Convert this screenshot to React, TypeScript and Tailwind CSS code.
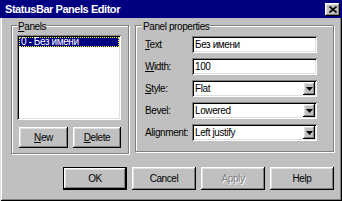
const font = "font-['Liberation_Sans',Arial,sans-serif] text-[10px] tracking-[-0.4px] text-black";
const raised =
  "shadow-[inset_-1px_-1px_#000,inset_1px_1px_#fff,inset_-2px_-2px_#808080,inset_2px_2px_#dfdfdf] bg-[#c0c0c0]";
const sunken =
  "shadow-[inset_1px_1px_#808080,inset_-1px_-1px_#fff,inset_2px_2px_#000,inset_-2px_-2px_#dfdfdf] bg-white";
const etched = "relative border border-[#808080] shadow-[inset_1px_1px_#fff,1px_1px_#fff]";

const Btn = ({ children, className = "", def = false, disabled = false }: {
  children: React.ReactNode;
  className?: string;
  def?: boolean;
  disabled?: boolean;
}) => (
  <div className={`${className} ${def ? "border border-black" : ""} flex`}>
    <div
      className={`flex-1 flex items-center justify-center ${raised} ${
        disabled ? "text-[#808080] [text-shadow:1px_1px_#fff]" : ""
      }`}
    >
      {children}
    </div>
  </div>
);

const Combo = ({ value }: { value: string }) => (
  <div className={`${sunken} h-[17px] flex items-stretch p-[2px]`}>
    <span className="flex-1 pl-[1px] leading-[13px]">{value}</span>
    <div className={`${raised} w-[12px] flex items-center justify-center`}>
      <svg width="7" height="4" viewBox="0 0 7 4">
        <path d="M0 0h7L3.5 4z" fill="#000" />
      </svg>
    </div>
  </div>
);

const Field = ({ value }: { value: string }) => (
  <div className={`${sunken} h-[17px] flex items-center pl-[3px]`}>{value}</div>
);

const rows: { label: React.ReactNode; control: React.ReactNode }[] = [
  { label: <><u>T</u>ext</>, control: <Field value="Без имени" /> },
  { label: <><u>W</u>idth:</>, control: <Field value="100" /> },
  { label: <><u>S</u>tyle:</>, control: <Combo value="Flat" /> },
  { label: <>Bevel:</>, control: <Combo value="Lowered" /> },
  { label: <>Alignment:</>, control: <Combo value="Left justify" /> },
];

export default function App() {
  return (
    <div className={`${font} w-[342px] h-[201px] bg-[#c0c0c0] flex flex-col`}>
      {/* title bar */}
      <div className="h-[18px] bg-[#000080] flex items-center justify-between pl-[5px] pr-[2px]">
        <span className="text-white font-bold text-[11px] tracking-[-0.45px]">StatusBar Panels Editor</span>
        <div className={`${raised} w-[15px] h-[13px] flex items-center justify-center`}>
          <svg width="8" height="7" viewBox="0 0 8 7">
            <path d="M0.5 0.5L7.5 6.5M7.5 0.5L0.5 6.5" stroke="#000" strokeWidth="1.6" />
          </svg>
        </div>
      </div>

      {/* body */}
      <div className="flex-1 pt-[7px] pl-[11px] shadow-[inset_1px_0_#dfdfdf,inset_-1px_-1px_#000,inset_2px_0_#fff,inset_-2px_-2px_#808080]">
        <div className="flex items-start gap-[6px]">
          <div className={`${etched} w-[118px] h-[129px] pt-[9px] pl-[5px]`}>
            <span className="absolute -top-[7px] left-[5px] px-[1px] bg-[#c0c0c0]">
              <u>P</u>anels
            </span>
            <div className={`${sunken} w-[104px] h-[85px] p-[2px]`}>
              <div className="h-[10px] bg-[#000080] text-white border border-dotted border-[#ffff00] flex items-center pl-[1px] leading-none">
                0 - Без имени
              </div>
            </div>
            <div className="flex gap-[5px] mt-[7px] ml-[2px]">
              <Btn className="w-[49px] h-[21px]">
                <u>N</u>ew
              </Btn>
              <Btn className="w-[48px] h-[21px]">
                <u>D</u>elete
              </Btn>
            </div>
          </div>

          <div className={`${etched} w-[199px] h-[127px] pt-[10px] pl-[9px]`}>
            <span className="absolute -top-[7px] left-[6px] px-[1px] bg-[#c0c0c0]">Panel properties</span>
            <div className="flex flex-col gap-[5px]">
              {rows.map((r, i) => (
                <div key={i} className="flex items-center">
                  <span className="w-[47px]">{r.label}</span>
                  <div className="w-[125px]">{r.control}</div>
                </div>
              ))}
            </div>
          </div>
        </div>

        <div className="flex justify-end gap-[5px] pr-[8px] mt-[13px]">
          <Btn def className="w-[64px] h-[23px]">OK</Btn>
          <Btn className="w-[64px] h-[23px]">Cancel</Btn>
          <Btn disabled className="w-[64px] h-[23px]">Apply</Btn>
          <Btn className="w-[64px] h-[23px]">Help</Btn>
        </div>
      </div>
    </div>
  );
}
